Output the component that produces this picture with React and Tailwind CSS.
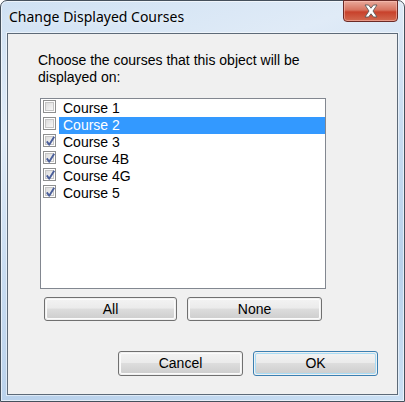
import React from "react";

const courses = [
  { name: "Course 1", checked: false, selected: false },
  { name: "Course 2", checked: false, selected: true },
  { name: "Course 3", checked: true, selected: false },
  { name: "Course 4B", checked: true, selected: false },
  { name: "Course 4G", checked: true, selected: false },
  { name: "Course 5", checked: true, selected: false },
];

function Check({ checked }) {
  return (
    <div className="w-[13px] h-[13px] shrink-0 border border-[#8e8f8f] bg-white p-[1px]">
      <div className="relative w-full h-full border border-[#c5c5c5] bg-gradient-to-br from-[#dcdcdc] to-[#f8f8f8]">
        {checked && (
          <svg
            viewBox="0 0 9 9"
            className="absolute left-0 top-0 w-[9px] h-[9px] overflow-visible"
          >
            <path
              d="M0.8 4.4 L3.2 7.8 L8.2 -0.2"
              fill="none"
              stroke="#4b5f9a"
              strokeWidth="1.9"
              strokeLinejoin="round"
            />
          </svg>
        )}
      </div>
    </div>
  );
}

function Btn({ children, w, h, primary }) {
  return (
    <div
      className={`${w} ${h} rounded-[3px] border ${
        primary ? "border-[#3c7fb1]" : "border-[#707070]"
      } p-[1px]`}
    >
      <div
        className={`w-full h-full rounded-[2px] flex items-center justify-center ${
          primary ? "border border-[#a8dcf5]" : "border border-[#fbfbfb]"
        } bg-[linear-gradient(to_bottom,#f2f2f2_0%,#ebebeb_45%,#dddddd_50%,#cfcfcf_100%)] text-[14px] text-black`}
      >
        {children}
      </div>
    </div>
  );
}

export default function App() {
  return (
    <div
      className="w-[405px] h-[402px] rounded-t-[7px] border border-[#45505c] bg-[linear-gradient(160deg,#cfe1f3_0%,#e0ebf7_25%,#c8dcf1_50%,#b9d1eb_75%,#cbe0f4_100%)] shadow-[inset_0_0_0_1px_rgba(255,255,255,0.6)] flex flex-col"
      style={{ fontFamily: '"Liberation Sans", Arial, sans-serif' }}
    >
      <div className="relative h-[32px] shrink-0">
        <div
          className="pl-[8px] pt-[6px] text-[14px] leading-[20px] text-black [text-shadow:0_0_6px_rgba(255,255,255,0.9)]"
          style={{ fontFamily: '"Noto Sans", "Open Sans", sans-serif' }}
        >
          Change Displayed Courses
        </div>
        <div className="absolute right-[6px] top-[-1px] w-[55px] h-[22px] rounded-b-[4px] border border-[#6b2a26] bg-[linear-gradient(to_bottom,#e9a99b_0%,#d7735f_45%,#c8412b_55%,#d26a50_100%)] shadow-[inset_0_0_0_1px_rgba(255,200,190,0.5)] flex items-center justify-center">
          <svg viewBox="0 0 16 14" className="w-[16px] h-[14px]">
            <path
              d="M2 1 L5.5 1 L8 4.2 L10.5 1 L14 1 L10 7 L14 13 L10.5 13 L8 9.8 L5.5 13 L2 13 L6 7 Z"
              fill="#ffffff"
              stroke="#5a5a5a"
              strokeWidth="0.9"
              strokeLinejoin="round"
            />
          </svg>
        </div>
      </div>
      <div className="mx-[6px] mb-[6px] flex-1 border border-[#5d6a78] bg-[#f0f0f0] shadow-[0_0_0_1px_rgba(255,255,255,0.5)] flex flex-col">
        <div className="pl-[30px] pt-[18px] text-[14px] leading-[17px] text-black">
          Choose the courses that this object will be
          <br />
          displayed on:
        </div>
        <div className="ml-[32px] mt-[12px] w-[286px] h-[191px] border border-[#828790] bg-white pt-[1px]">
          {courses.map((c) => (
            <div key={c.name} className="flex h-[17px] items-start">
              <div className="ml-[2px] mt-[0px] w-[16px]">
                <Check checked={c.checked} />
              </div>
              <div
                className={`flex-1 h-[17px] pl-[4px] text-[14px] leading-[17px] ${
                  c.selected ? "bg-[#3399ff] text-white" : "text-black"
                }`}
              >
                {c.name}
              </div>
            </div>
          ))}
        </div>
        <div className="ml-[36px] mt-[8px] flex gap-[10px]">
          <Btn w="w-[133px]" h="h-[24px]">All</Btn>
          <Btn w="w-[135px]" h="h-[24px]">None</Btn>
        </div>
        <div className="ml-[110px] mt-[30px] flex gap-[10px]">
          <Btn w="w-[125px]" h="h-[25px]">Cancel</Btn>
          <Btn w="w-[125px]" h="h-[25px]" primary>
            OK
          </Btn>
        </div>
      </div>
    </div>
  );
}
